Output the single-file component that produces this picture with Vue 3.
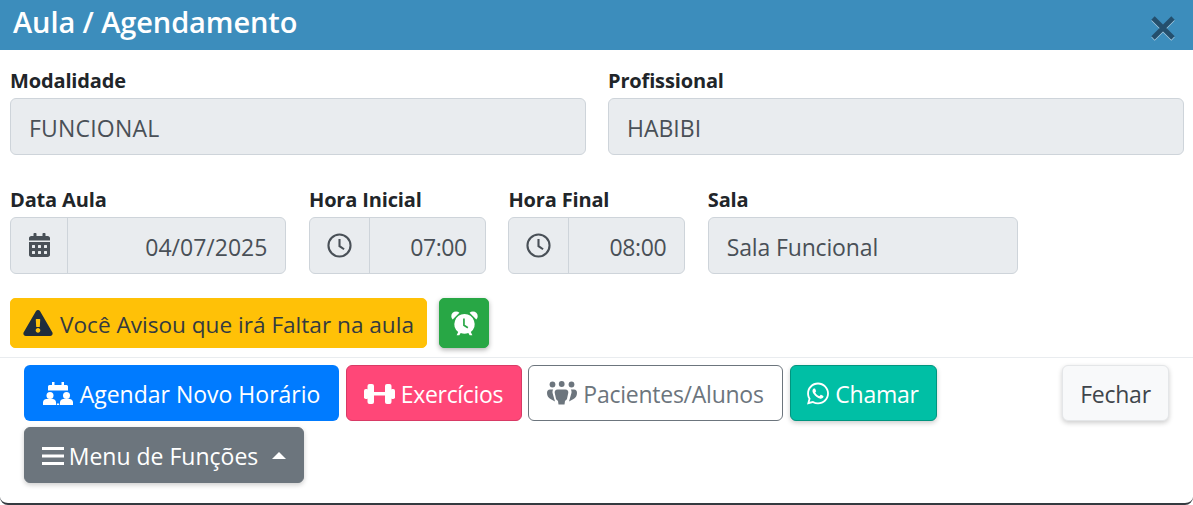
<script setup>
const calendar = 'M0 464c0 26.5 21.5 48 48 48h352c26.5 0 48-21.5 48-48V192H0v272zm320-196c0-6.6 5.4-12 12-12h40c6.6 0 12 5.4 12 12v40c0 6.6-5.4 12-12 12h-40c-6.6 0-12-5.4-12-12v-40zm0 128c0-6.6 5.4-12 12-12h40c6.6 0 12 5.4 12 12v40c0 6.6-5.4 12-12 12h-40c-6.6 0-12-5.4-12-12v-40zM192 268c0-6.6 5.4-12 12-12h40c6.6 0 12 5.4 12 12v40c0 6.6-5.4 12-12 12h-40c-6.6 0-12-5.4-12-12v-40zm0 128c0-6.6 5.4-12 12-12h40c6.6 0 12 5.4 12 12v40c0 6.6-5.4 12-12 12h-40c-6.6 0-12-5.4-12-12v-40zM64 268c0-6.6 5.4-12 12-12h40c6.6 0 12 5.4 12 12v40c0 6.6-5.4 12-12 12H76c-6.6 0-12-5.4-12-12v-40zm0 128c0-6.6 5.4-12 12-12h40c6.6 0 12 5.4 12 12v40c0 6.6-5.4 12-12 12H76c-6.6 0-12-5.4-12-12v-40zM400 64h-48V16c0-8.8-7.2-16-16-16h-32c-8.8 0-16 7.2-16 16v48H160V16c0-8.8-7.2-16-16-16h-32c-8.8 0-16 7.2-16 16v48H48C21.5 64 0 85.5 0 112v48h448v-48c0-26.5-21.5-48-48-48z'
const warn = 'M569.517 440.013C587.975 472.007 564.806 512 527.94 512H48.054c-36.937 0-59.999-40.055-41.577-71.987L246.423 23.985c18.467-32.009 64.72-31.951 83.154 0l239.94 416.028zM288 354c-25.405 0-46 20.595-46 46s20.595 46 46 46 46-20.595 46-46-20.595-46-46-46zm-43.673-165.346l7.418 136c.347 6.364 5.609 11.346 11.982 11.346h48.546c6.373 0 11.635-4.982 11.982-11.346l7.418-136c.375-6.874-5.098-12.654-11.982-12.654h-63.383c-6.884 0-12.356 5.78-11.981 12.654z'
const whatsapp = 'M380.9 97.1C339 55.1 283.2 32 223.9 32c-122.4 0-222 99.6-222 222 0 39.1 10.2 77.3 29.6 111L0 480l117.7-30.9c32.4 17.7 68.9 27 106.1 27h.1c122.3 0 224.1-99.6 224.1-222 0-59.3-25.2-115-67.1-157zm-157 341.6c-33.2 0-65.7-8.9-94-25.7l-6.7-4-69.8 18.3L72 359.2l-4.4-7c-18.5-29.4-28.2-63.3-28.2-98.2 0-101.7 82.8-184.5 184.6-184.5 49.3 0 95.6 19.2 130.4 54.1 34.8 34.9 56.2 81.2 56.1 130.5 0 101.8-84.9 184.6-186.6 184.6zm101.2-138.2c-5.5-2.8-32.8-16.2-37.9-18-5.1-1.9-8.8-2.8-12.5 2.8-3.7 5.6-14.3 18-17.6 21.8-3.2 3.7-6.5 4.2-12 1.4-32.6-16.3-54-29.1-75.5-66-5.7-9.8 5.7-9.1 16.3-30.3 1.8-3.7.9-6.9-.5-9.7-1.4-2.8-12.5-30.1-17.1-41.2-4.5-10.8-9.1-9.3-12.5-9.5-3.2-.2-6.9-.2-10.6-.2-3.7 0-9.7 1.4-14.8 6.9-5.1 5.6-19.4 19-19.4 46.3 0 27.3 19.9 53.7 22.6 57.4 2.8 3.7 39.1 59.7 94.8 83.8 35.2 15.2 49 16.5 66.6 13.9 10.7-1.6 32.8-13.4 37.4-26.4 4.6-13 4.6-24.1 3.2-26.4-1.3-2.5-5-3.9-10.5-6.6z'
</script>

<template>
  <div class="modal">
    <header class="head">
      <h1>Aula / Agendamento</h1>
      <svg class="close" viewBox="0 0 26 26"><path d="M3 3 L23 23 M23 3 L3 23" /></svg>
    </header>

    <section class="body">
      <div class="row two">
        <div class="field"><label>Modalidade</label><div class="ctl wide-text">FUNCIONAL</div></div>
        <div class="field"><label>Profissional</label><div class="ctl">HABIBI</div></div>
      </div>

      <div class="row four">
        <div class="field w-data">
          <label>Data Aula</label>
          <div class="group">
            <span class="addon wide"><svg class="ic-cal" viewBox="0 0 448 512"><path :d="calendar" /></svg></span>
            <div class="val">04/07/2025</div>
          </div>
        </div>
        <div class="field w-hora">
          <label>Hora Inicial</label>
          <div class="group">
            <span class="addon"><svg class="ic-clock" viewBox="0 0 24 24"><circle cx="12" cy="12" r="10.6" /><path d="M12 5.8V12.6L16.4 15.6" /></svg></span>
            <div class="val time">07:00</div>
          </div>
        </div>
        <div class="field w-hora">
          <label>Hora Final</label>
          <div class="group">
            <span class="addon"><svg class="ic-clock" viewBox="0 0 24 24"><circle cx="12" cy="12" r="10.6" /><path d="M12 5.8V12.6L16.4 15.6" /></svg></span>
            <div class="val time">08:00</div>
          </div>
        </div>
        <div class="field w-sala"><label>Sala</label><div class="ctl narrow-text">Sala Funcional</div></div>
      </div>

      <div class="alerts">
        <button class="warn"><svg class="ic-warn" viewBox="0 0 576 512"><path :d="warn" /></svg>Você Avisou que irá Faltar na aula</button>
        <button class="alarm">
          <svg class="ic-alarm" viewBox="0 0 24 24">
            <path class="fill" d="M12 3.500a9 9 0 0 0-5.600 16L5 22.500h2.400l1.200-2a9 9 0 0 0 6.800 0l1.200 2H19l-1.400-3A9 9 0 0 0 12 3.500z" />
            <path class="hand" d="M11.500 7.500v6l3.500 2.200" />
            <path class="fill" d="M1.500 8.500a4.200 4.200 0 0 1 6-6zM22.500 8.500a4.200 4.200 0 0 0-6-6z" />
          </svg>
        </button>
      </div>
    </section>

    <footer class="foot">
      <div class="actions">
        <button class="btn blue">
          <svg class="ic-agenda" viewBox="0 0 30 23">
            <path d="M6.500 3H9V0h2.500v3h7V0H21v3h2.500A1.500 1.500 0 0 1 25 4.500V8.500H5V4.500A1.500 1.500 0 0 1 6.500 3z" />
            <circle cx="7" cy="13.500" r="3.500" /><circle cx="23.500" cy="13.500" r="3.500" />
            <path d="M0 23v-2.500c0-2 1.500-3.500 3.500-3.500h6c2 0 3.500 1.500 3.500 3.500V23zM17 23v-2.500c0-2 1.500-3.500 3.500-3.500h6c2 0 3.500 1.500 3.500 3.500V23z" />
            <path d="M13.800 21.500h2.400V23h-2.400z" />
          </svg>
          Agendar Novo Horário
        </button>
        <button class="btn pink">
          <svg class="ic-dumb" viewBox="0 0 31 20">
            <rect x="0" y="5" width="4.500" height="10" rx="1.800" />
            <rect x="3.500" y="0" width="6.500" height="20" rx="2" />
            <rect x="9" y="8" width="13" height="3.500" />
            <rect x="21" y="0" width="6.500" height="20" rx="2" />
            <rect x="26.500" y="5" width="4.500" height="10" rx="1.800" />
          </svg>
          Exercícios
        </button>
        <button class="btn outline">
          <svg class="ic-users" viewBox="0 0 30 24">
            <circle cx="5.500" cy="3.500" r="2.900" /><circle cx="14.700" cy="3" r="2.900" /><circle cx="24.500" cy="3.500" r="2.900" />
            <path d="M10.500 8.500h8c2 0 3 1.500 2.800 3.200l-1.300 6c-.3 1-1.500 1.300-2 2.300L17.500 23.500h-6L11 20c-.5-1-1.700-1.300-2-2.300l-1.300-6C7.500 10 8.500 8.500 10.500 8.500z" />
            <path d="M5.500 8.500H3c-2 0-3 1.500-3 3.500 0 3 1.500 5 3.500 6L8 20.500l-.8-2.800-1.700-6c-.2-1 .1-2.200.6-3.200z" />
            <path d="M24.500 8.500H27c2 0 3 1.500 3 3.500 0 3-1.500 5-3.500 6L22 20.500l.8-2.800 1.700-6c.2-1-.1-2.200-.6-3.200z" />
          </svg>
          Pacientes/Alunos
        </button>
        <button class="btn teal"><svg class="ic-wa" viewBox="0 0 448 512"><path :d="whatsapp" /></svg>Chamar</button>
        <button class="btn gray">
          <svg class="ic-bars" viewBox="0 0 22 18"><path d="M0 1.500h22M0 9h22M0 16.500h22" /></svg>
          Menu de Funções
          <span class="caret"></span>
        </button>
      </div>
      <button class="btn light">Fechar</button>
    </footer>
  </div>
</template>

<style>
html, body { margin: 0; background: #fff; }
</style>

<style scoped>
.modal {
  width: 1193px;
  height: 505px;
  box-sizing: border-box;
  display: flex;
  flex-direction: column;
  background: #fff;
  border-bottom: 2px solid #343a40;
  border-radius: 0 0 8px 8px;
  overflow: hidden;
  font-family: "Open Sans", "Noto Sans", sans-serif;
  color: #212529;
}
.head {
  height: 50px;
  flex: none;
  background: #3c8dbc;
  display: flex;
  justify-content: space-between;
  padding: 0 17px 0 13px;
}
.head h1 {
  margin: 0;
  color: #fff;
  font-size: 29px;
  font-weight: 600;
  line-height: 44px;
  letter-spacing: -0.1px;
}
.close { width: 26px; height: 26px; margin-top: 15px; fill: none; filter: drop-shadow(0 1px 0 rgba(255,255,255,.55)); }
.close path { stroke: #244f6d; stroke-width: 4.8; }
.body { padding: 18px 9px 0 10px; flex: none; height: 308px; box-sizing: border-box; border-bottom: 1px solid #e9ecef; }
.row { display: flex; }
.two { gap: 22px; margin-bottom: 32px; }
.two .field { flex: 1; }
.four { gap: 22.6px; margin-bottom: 24px; }
.w-data { width: 276.4px; }
.w-hora { width: 176.8px; }
.w-sala { width: 310px; }
label {
  display: block;
  font-size: 20px;
  font-weight: 700;
  line-height: 26px;
  margin-bottom: 4px;
  letter-spacing: -0.15px;
}
.ctl, .group {
  height: 57px;
  box-sizing: border-box;
  background: #e9ecef;
  border: 1px solid #ced4da;
  border-radius: 6px;
  color: #495057;
  font-size: 23px;
}
.ctl { padding: 0 18px; line-height: 58px; }
.wide-text { letter-spacing: 0.2px; }
.narrow-text { letter-spacing: -0.15px; }
.group { display: flex; }
.addon {
  width: 59px;
  flex: none;
  border-right: 1px solid #ced4da;
  display: flex;
  align-items: center;
  justify-content: center;
  margin-top: -1px;
}
.addon.wide { width: 56px; }
.val { flex: 1; text-align: right; padding-right: 18px; line-height: 58px; }
.time { letter-spacing: -0.4px; }
.ic-cal { width: 21px; height: 24px; fill: #495057; }
.ic-clock { width: 25px; height: 25px; fill: none; stroke: #495057; stroke-width: 2; }
.alerts { display: flex; gap: 12px; }
button { font-family: inherit; cursor: default; }
.warn {
  width: 417px;
  height: 50px;
  padding: 2px 0 0;
  display: flex;
  align-items: center;
  justify-content: center;
  gap: 7px;
  background: #ffc107;
  border: 1px solid #ffc107;
  border-radius: 5px;
  color: #343a40;
  font-size: 22.6px;
}
.ic-warn { width: 30px; height: 26px; fill: #1f2d3d; margin-top: -2px; }
.alarm {
  width: 50px;
  height: 50px;
  padding: 0;
  background: #28a745;
  border: 1px solid #28a745;
  border-radius: 5px;
  box-shadow: 0 2px 5px rgba(0,0,0,.3);
  display: flex;
  align-items: center;
  justify-content: center;
}
.ic-alarm { width: 27px; height: 27px; }
.ic-alarm .fill { fill: #fff; }
.ic-alarm .hand { fill: none; stroke: #28a745; stroke-width: 1.5; }
.foot {
  flex: 1;
  display: flex;
  justify-content: space-between;
  align-items: flex-start;
  padding: 7px 24px 0;
}
.actions { display: flex; flex-wrap: wrap; width: 930px; column-gap: 6.5px; row-gap: 6px; }
.btn {
  height: 56px;
  padding: 2px 0 0;
  box-sizing: border-box;
  display: inline-flex;
  align-items: center;
  justify-content: center;
  gap: 6px;
  border-radius: 6px;
  border: 1px solid transparent;
  font-size: 23px;
  letter-spacing: -0.25px;
  box-shadow: 0 2px 5px rgba(0,0,0,.2);
  white-space: nowrap;
}
.blue { width: 315px; background: #007bff; color: #fff; box-shadow: none; letter-spacing: 0; gap: 7px; }
.pink { width: 176px; background: #ff4778; border-color: #d83a65; color: #fff; box-shadow: none; letter-spacing: -0.3px; }
.outline { width: 255px; background: #fff; border-color: #6c757d; color: #6c757d; box-shadow: none; }
.teal { width: 147px; background: #00bfa5; border-color: #00957f; color: #fff; }
.gray { width: 280px; background: #6c757d; border-color: #6c757d; color: #fff; margin-right: 600px; letter-spacing: 0; gap: 5px; }
.light { width: 107px; background: #f8f9fa; border-color: #e4e6e8; color: #3f454b; }
.ic-agenda { width: 30px; height: 23px; fill: #fff; margin-top: -1px; }
.ic-dumb { width: 31px; height: 20px; fill: #fff; margin-top: -1px; }
.ic-users { width: 30px; height: 24px; fill: #6c757d; margin-top: -2px; }
.ic-wa { width: 22px; height: 25px; fill: #fff; margin-top: -1px; }
.ic-bars { width: 22px; height: 18px; fill: none; stroke: #fff; stroke-width: 3; }
.caret {
  width: 0; height: 0;
  margin-left: 9px;
  margin-top: -1px;
  border-left: 7px solid transparent;
  border-right: 7px solid transparent;
  border-bottom: 7px solid #fff;
}
</style>
